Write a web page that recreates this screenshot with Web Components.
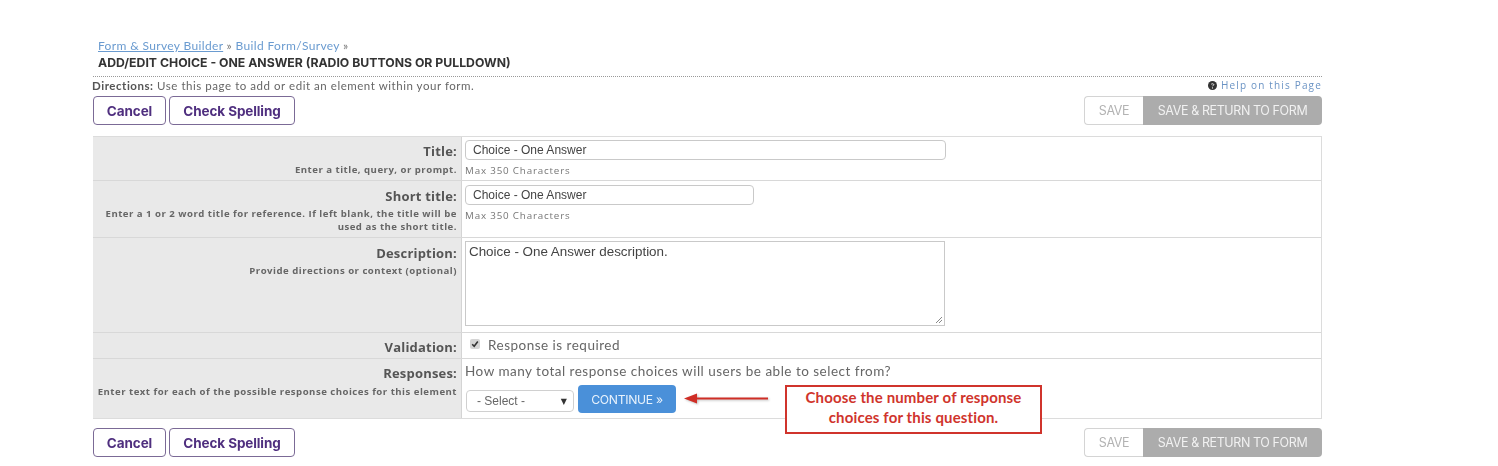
<!DOCTYPE html>
<html>
<head>
<meta charset="utf-8">
<title>Add/Edit Choice</title>
<style>
  html, body { margin: 0; background: #fff; }
  body { font-family: "Lato", sans-serif; color: #555; }
</style>
</head>
<body>
<form-page></form-page>

<script>
class ActionBar extends HTMLElement {
  connectedCallback() {
    this.attachShadow({ mode: 'open' });
    this.shadowRoot.innerHTML = `
      <style>
        :host { display: flex; justify-content: space-between; align-items: flex-start; }
        .group { display: flex; }
        .left { gap: 3px; }
        button { box-sizing: border-box; height: 29px; margin: 0; background: #fff; cursor: pointer; }
        .plain {
          border: 1px solid #7b6a96;
          border-radius: 4px;
          color: #4f2f7f;
          font: 700 13.5px "Inter", sans-serif;
          letter-spacing: -0.1px;
        }
        .cancel { width: 73px; padding: 0; }
        .spell { width: 126px; padding: 0; }
        .save, .return { font: 400 12.5px "Inter", sans-serif; letter-spacing: -0.4px; padding: 0; }
        .save { width: 59px; border: 1px solid #d4d4d4; border-right: 0; border-radius: 4px 0 0 4px; color: #b3b3b3; }
        .return { width: 179px; border: 0; border-radius: 0 4px 4px 0; background: #acacac; color: #f1f1f1; }
      </style>
      <div class="group left">
        <button class="plain cancel">Cancel</button>
        <button class="plain spell">Check Spelling</button>
      </div>
      <div class="group">
        <button class="save">SAVE</button>
        <button class="return">SAVE &amp; RETURN TO FORM</button>
      </div>
    `;
  }
}

class FormRow extends HTMLElement {
  connectedCallback() {
    this.attachShadow({ mode: 'open' });
    const hint = this.getAttribute('hint');
    this.shadowRoot.innerHTML = `
      <style>
        :host {
          display: grid;
          grid-template-columns: 369px 1fr;
          border-top: 1px solid #d8d8d8;
          height: var(--row-height);
          box-sizing: border-box;
        }
        :host([first]) { border-top: 0; }
        .head {
          background: #e9e9e9;
          border-right: 1px solid #d4d4d4;
          text-align: right;
          padding: var(--head-top, 7px) 4px 0 4px;
          box-sizing: border-box;
        }
        .label {
          font: 700 13px/17px "Open Sans", sans-serif;
          color: #555;
          letter-spacing: 0.2px;
        }
        .hint {
          font: 700 9.6px/13px "Open Sans", sans-serif;
          color: #666;
          letter-spacing: 0.49px;
          margin-top: var(--hint-gap, 2px);
        }
        .body { padding: 3px 3px 0 3px; min-width: 0; }
      </style>
      <div class="head">
        <div class="label">${this.getAttribute('label')}</div>
        ${hint ? `<div class="hint">${hint}</div>` : ''}
      </div>
      <div class="body"><slot></slot></div>
    `;
  }
}

class TextBox extends HTMLElement {
  connectedCallback() {
    this.attachShadow({ mode: 'open' });
    this.shadowRoot.innerHTML = `
      <style>
        :host {
          display: flex;
          align-items: center;
          box-sizing: border-box;
          height: 20px;
          border: 1px solid #c9c9c9;
          border-radius: 4px;
          padding: 0 7px 1px;
          font: 12px "Liberation Sans", sans-serif;
          color: #444;
          background: #fff;
        }
      </style>
      <slot></slot>
    `;
  }
}

class NoteBox extends HTMLElement {
  connectedCallback() {
    this.attachShadow({ mode: 'open' });
    this.shadowRoot.innerHTML = `
      <style>
        :host {
          display: block;
          font: 9.8px/14px "Open Sans", sans-serif;
          color: #777;
          letter-spacing: 0.82px;
          margin-top: 4px;
        }
      </style>
      <slot></slot>
    `;
  }
}

class FormPage extends HTMLElement {
  connectedCallback() {
    this.attachShadow({ mode: 'open' });
    this.shadowRoot.innerHTML = `
      <style>
        :host { display: block; position: relative; height: 466px; width: 1498px; overflow: hidden; filter: blur(0.45px); }
        .page { width: 1229px; margin-left: 93px; padding-top: 38px; }
        .crumbs { padding-left: 5px; font: 12px/16px "Lato", sans-serif; letter-spacing: 0.35px; color: #6a9bd0; }
        .crumbs a { color: #6a9bd0; }
        .crumbs .sep { color: #777; }
        h1 { margin: 0; padding: 1px 0 0 5px; font: 700 12.25px/16px "Inter", sans-serif; color: #333; text-transform: uppercase; letter-spacing: 0; }
        .dots { border-top: 1px dotted #999; margin-top: 5px; }
        .directions { display: flex; justify-content: space-between; height: 19px; font: 11.5px/17px "Lato", sans-serif; letter-spacing: 0.54px; color: #666; }
        .directions > span:first-child { margin-left: -1px; }
        .directions b { color: #555; }
        .help { color: #6a93c4; font: 10px/15px "Open Sans", sans-serif; letter-spacing: 1.17px; display: flex; align-items: center; gap: 4px; height: 15px; margin-top: 1px; }
        .help svg { display: block; }
        .table { border: 1px solid #dcdcdc; border-left: 0; margin: 11px 0 9px; }
        .q { font: 13.5px/18px "Lato", sans-serif; letter-spacing: 0.49px; color: #666; }
        .check { display: flex; align-items: center; gap: 8px; padding: 0 0 0 5px; }
        .cb { width: 10px; height: 10px; margin-top: -2px; background: #d5d5d5; border-radius: 2px; display: flex; align-items: center; justify-content: center; }
        .area {
          position: relative;
          box-sizing: border-box;
          width: 480px;
          height: 85px;
          border: 1px solid #c9c9c9;
          padding: 1px 3px 0;
          font: 13.4px/18px "Liberation Sans", sans-serif;
          color: #444;
        }
        .grip { position: absolute; right: 1px; bottom: 1px; display: block; }
        .pick { display: flex; align-items: flex-start; gap: 4px; margin-top: 5px; padding-left: 1px; }
        .select {
          box-sizing: border-box;
          display: flex;
          justify-content: space-between;
          align-items: center;
          width: 108px;
          height: 22px;
          margin-top: 5px;
          border: 1px solid #d0d0d0;
          border-radius: 4px;
          padding: 0 6px 0 10px;
          font: 12px "Liberation Sans", sans-serif;
          color: #666;
        }
        .select i { font: normal 8px "DejaVu Sans", sans-serif; color: #333; }
        .go {
          box-sizing: border-box;
          width: 98px;
          height: 28px;
          border: 0;
          border-radius: 4px;
          background: #4a90d9;
          color: #e8f2fc;
          font: 12.2px "Inter", sans-serif;
          letter-spacing: -0.3px;
          padding: 0;
        }
        .arrow { position: absolute; left: 684px; top: 390px; display: block; filter: drop-shadow(1px 1px 1px rgba(0,0,0,.25)); }
        .callout {
          position: absolute;
          left: 785px;
          top: 385px;
          box-sizing: border-box;
          width: 257px;
          height: 49px;
          border: 2px solid #d0342c;
          background: #fff;
          color: #d0342c;
          text-align: center;
          font: 700 15px/20px "Lato", sans-serif;
          letter-spacing: 0.14px;
        }
      </style>
      <div class="page">
        <div class="crumbs"><a href="#">Form &amp; Survey Builder</a> <span class="sep">»</span> Build Form/Survey <span class="sep">»</span></div>
        <h1>Add/Edit Choice - One Answer (Radio Buttons or Pulldown)</h1>
        <div class="dots"></div>
        <div class="directions">
          <span><b>Directions:</b> Use this page to add or edit an element within your form.</span>
          <span class="help">
            <svg width="9" height="9" viewBox="0 0 9 9"><circle cx="4.5" cy="4.5" r="4.5" fill="#333"/><path d="M3.2 3.4c.2-.8 2.6-1 2.6.3 0 .9-1.3.8-1.3 1.6" fill="none" stroke="#fff" stroke-width=".9"/><circle cx="4.5" cy="6.9" r=".6" fill="#fff"/></svg>
            Help on this Page
          </span>
        </div>
        <action-bar></action-bar>
        <div class="table">
          <form-row first label="Title:" hint="Enter a title, query, or prompt." style="--row-height:43px;--head-top:6px;--hint-gap:3px">
            <text-box style="width:481px">Choice - One Answer</text-box>
            <note-box>Max 350 Characters</note-box>
          </form-row>
          <form-row label="Short title:" hint="Enter a 1 or 2 word title for reference. If left blank, the title will be used as the short title." style="--row-height:57px">
            <div style="padding-top:1px">
              <text-box style="width:289px">Choice - One Answer</text-box>
              <note-box>Max 350 Characters</note-box>
            </div>
          </form-row>
          <form-row label="Description:" hint="Provide directions or context (optional)" style="--row-height:95px">
            <div class="area">Choice - One Answer description.
              <svg class="grip" width="8" height="8" viewBox="0 0 8 8"><path d="M1 7 7 1M4 7l3-3" stroke="#888" stroke-width="1"/></svg>
            </div>
          </form-row>
          <form-row label="Validation:" style="--row-height:26px;--head-top:6px">
            <div class="check q">
              <span class="cb"><svg width="8" height="8" viewBox="0 0 8 8"><path d="M1.2 4.2 3.200 6.200 6.800 1.600" fill="none" stroke="#333" stroke-width="1.600"/></svg></span>
              Response is required
            </div>
          </form-row>
          <form-row label="Responses:" hint="Enter text for each of the possible response choices for this element" style="--row-height:60px;--head-top:6px;--hint-gap:3px">
            <div class="q">How many total response choices will users be able to select from?</div>
            <div class="pick">
              <div class="select"><span>- Select -</span><i>▼</i></div>
              <button class="go">CONTINUE »</button>
            </div>
          </form-row>
        </div>
        <action-bar></action-bar>
      </div>
      <svg class="arrow" width="86" height="18" viewBox="0 0 86 18">
        <path d="M84 8.500H10" stroke="#cf2e26" stroke-width="2.200"/>
        <path d="M0 8.500 13 3.500V13.500Z" fill="#cf2e26"/>
      </svg>
      <div class="callout">Choose the number of response<br>choices for this question.</div>
    `;
  }
}

customElements.define('action-bar', ActionBar);
customElements.define('form-row', FormRow);
customElements.define('text-box', TextBox);
customElements.define('note-box', NoteBox);
customElements.define('form-page', FormPage);
</script>
</body>
</html>
